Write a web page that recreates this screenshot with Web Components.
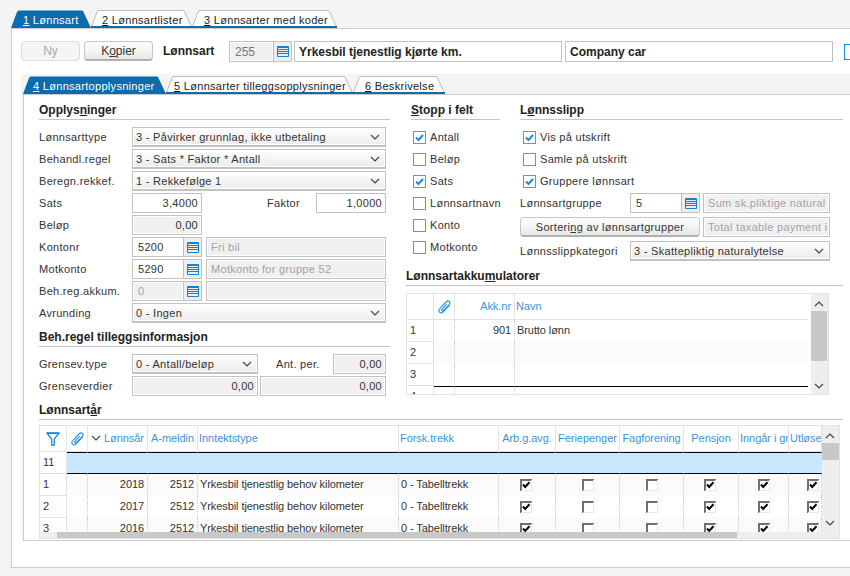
<!DOCTYPE html>
<html>
<head>
<meta charset="utf-8">
<style>
  html, body { margin: 0; height: 576px; overflow: hidden; }
  body { background: #f4f4f4; color: #333; font: 11px "Liberation Sans", Arial, sans-serif; letter-spacing: .3px; }
</style>
</head>
<body>
<pay-tabs left="11">
  <pay-tab w="80" pad="12" active><u>1</u> Lønnsart</pay-tab>
  <pay-tab w="101" pad="11"><u>2</u> Lønnsartlister</pay-tab>
  <pay-tab w="145" pad="12"><u>3</u> Lønnsarter med koder</pay-tab>
</pay-tabs>
<pay-panel>
  <pay-toolbar>
    <pay-btn w="59" disabled>Ny</pay-btn>
    <pay-text w="4"></pay-text>
    <pay-btn w="69"><span>K<u>o</u>pier</span></pay-btn>
    <pay-text w="76" indent="10" bold>Lønnsart</pay-text>
    <pay-field w="63" h="21" value="255" list disabled soft></pay-field>
    <pay-text w="2"></pay-text>
    <pay-field w="268" h="21" value="Yrkesbil tjenestlig kjørte km." bold></pay-field>
    <pay-text w="3"></pay-text>
    <pay-field w="268" h="21" value="Company car" bold></pay-field>
    <pay-edge></pay-edge>
  </pay-toolbar>
  <pay-sheet>
    <pay-tabs slot="tabs" left="2" line>
      <pay-tab w="143" pad="10" active><u>4</u> Lønnsartopplysninger</pay-tab>
      <pay-tab w="187" pad="8"><u>5</u> Lønnsarter tilleggsopplysninger</pay-tab>
      <pay-tab w="92" pad="12"><u>6</u> Beskrivelse</pay-tab>
    </pay-tabs>
    <pay-columns>
      <pay-stack w="351">
        <pay-heading>Opplys<u>n</u>inger</pay-heading>
        <pay-stack gap="2" w="347">
          <pay-row label="Lønnsarttype"><pay-select w="254" value="3 - Påvirker grunnlag, ikke utbetaling"></pay-select></pay-row>
          <pay-row label="Behandl.regel"><pay-select w="254" value="3 - Sats * Faktor * Antall"></pay-select></pay-row>
          <pay-row label="Beregn.rekkef."><pay-select w="254" value="1 - Rekkefølge 1"></pay-select></pay-row>
          <pay-row label="Sats">
            <pay-field w="70" value="3,4000" right></pay-field>
            <pay-text w="114" indent="65">Faktor</pay-text>
            <pay-field w="70" value="1,0000" right></pay-field>
          </pay-row>
          <pay-row label="Beløp"><pay-field w="70" value="0,00" right disabled></pay-field></pay-row>
          <pay-row label="Kontonr">
            <pay-field w="70" value="5200" list></pay-field>
            <pay-text w="4"></pay-text>
            <pay-field w="180" value="Fri bil" disabled faded></pay-field>
          </pay-row>
          <pay-row label="Motkonto">
            <pay-field w="70" value="5290" list></pay-field>
            <pay-text w="4"></pay-text>
            <pay-field w="180" value="Motkonto for gruppe 52" disabled faded></pay-field>
          </pay-row>
          <pay-row label="Beh.reg.akkum.">
            <pay-field w="70" value="0" list disabled faded></pay-field>
            <pay-text w="4"></pay-text>
            <pay-field w="180" value="" disabled></pay-field>
          </pay-row>
          <pay-row label="Avrunding"><pay-select w="254" value="0 - Ingen"></pay-select></pay-row>
        </pay-stack>
        <pay-heading top="3">Beh.re<u>g</u>el tilleggsinformasjon</pay-heading>
        <pay-stack gap="2" w="347">
          <pay-row label="Grensev.type">
            <pay-select w="126" value="0 - Antall/beløp"></pay-select>
            <pay-text w="75" indent="18">Ant. per.</pay-text>
            <pay-field w="53" value="0,00" right disabled></pay-field>
          </pay-row>
          <pay-row label="Grenseverdier">
            <pay-field w="126" value="0,00" right disabled></pay-field>
            <pay-text w="2"></pay-text>
            <pay-field w="126" value="0,00" right disabled></pay-field>
          </pay-row>
        </pay-stack>
      </pay-stack>
      <pay-stack w="437">
        <pay-columns gap="20" left="5" h="166">
          <pay-stack w="89">
            <pay-heading><u>S</u>topp i felt</pay-heading>
            <pay-stack gap="2">
              <pay-check indent="2" checked>Antall</pay-check>
              <pay-check indent="2">Beløp</pay-check>
              <pay-check indent="2" checked>Sats</pay-check>
              <pay-check indent="2">Lønnsartnavn</pay-check>
              <pay-check indent="2">Konto</pay-check>
              <pay-check indent="2">Motkonto</pay-check>
            </pay-stack>
          </pay-stack>
          <pay-stack w="323">
            <pay-heading>L<u>ø</u>nnsslipp</pay-heading>
            <pay-stack gap="2">
              <pay-check indent="3" checked>Vis på utskrift</pay-check>
              <pay-check indent="3">Samle på utskrift</pay-check>
              <pay-check indent="3" checked>Gruppere lønnsart</pay-check>
              <pay-row label="Lønnsartgruppe" lw="110">
                <pay-field w="70" value="5" list></pay-field>
                <pay-text w="3"></pay-text>
                <pay-field w="127" value="Sum sk.pliktige natural" disabled faded></pay-field>
              </pay-row>
              <pay-row top="2">
                <pay-btn w="180" h="20"><span>Sorteri<u>ng</u> av lønnsartgrupper</span></pay-btn>
                <pay-text w="3"></pay-text>
                <pay-field w="127" value="Total taxable payment i" disabled faded></pay-field>
              </pay-row>
              <pay-row label="Lønnsslippkategori" lw="110" top="2"><pay-select w="200" value="3 - Skattepliktig naturalytelse"></pay-select></pay-row>
            </pay-stack>
          </pay-stack>
        </pay-columns>
        <pay-heading>Lønnsartakku<u>m</u>ulatorer</pay-heading>
        <pay-grid w="423" h="102" thumb="17,50" id="akk"></pay-grid>
      </pay-stack>
    </pay-columns>
    <pay-heading top="3">Lønnsart<u>å</u>r</pay-heading>
    <pay-grid w="801" h="114" thumb="17,17" hbar id="years"></pay-grid>
  </pay-sheet>
</pay-panel>

<script>
// tiny helper, every element gets its own shadow root from here
const make = (name, config) => {
  class C extends HTMLElement {
    constructor() {
      super();
      this.attachShadow({ mode: "open" });
    }
    connectedCallback() {
      this.shadowRoot.innerHTML = `<style>${config.pretty(this)}</style>${config.render(this)}`;
    }
  }
  customElements.define(name, C);
};

const esc = (s) => String(s).replace(/&/g, "&amp;").replace(/</g, "&lt;");
const num = (el, key, dflt) => el.hasAttribute(key) ? Number(el.getAttribute(key)) : dflt;

const LIST_ICON = `<svg width="12" height="11" viewBox="0 0 12 11"><path d="M.5.5h11v10H.5zM1 1.500h10M1 3.500h10M1 5.500h10M1 7.500h10" fill="none" stroke="#0a84dc"/></svg>`;
const CHEVRON = `<svg width="10" height="6" viewBox="0 0 10 6"><path d="M1 1l4 4 4-4" fill="none" stroke="#444" stroke-width="1.2"/></svg>`;
const CLIP = `<svg width="13" height="14" viewBox="0 0 13 14"><path d="M11.600 5L5.400 11.600C4.100 13 2.500 13.200 1.500 12.200S.7 9.600 2 8.300L8 2C9.100.9 10.600.7 11.500 1.500S12.100 3.700 11 4.800L5.700 10.200C5 10.900 4.200 11 3.800 10.600S3.600 9.500 4.300 8.800L8.700 4.200" fill="none" stroke="#2f95de" stroke-width="1.200"/></svg>`;
const FUNNEL = `<svg width="14" height="14" viewBox="0 0 14 14"><path d="M1 1.200H13L8.300 7V13L5.700 13V7Z" fill="none" stroke="#1a8ce0" stroke-width="1.300"/><path d="M1 1.200H13" stroke="#1a8ce0" stroke-width="1.800"/></svg>`;

make("pay-tabs", {
  pretty: (el) => `
    :host { display: flex; height: 18px; padding-left: ${num(el, "left", 0)}px; box-sizing: border-box; }
    ${el.hasAttribute("line") ? ":host { height: 20px; padding-top: 2px; }" : ":host { margin-top: 10px; }"}
  `,
  render: () => `<slot></slot>`
});

make("pay-tab", {
  pretty: (el) => `
    :host { display: block; position: relative; width: ${el.getAttribute("w")}px; height: 18px; box-sizing: border-box;
      padding-left: ${el.getAttribute("pad")}px; line-height: 21px; white-space: nowrap;
      color: ${el.hasAttribute("active") ? "#fff" : "#222"}; }
    svg { position: absolute; left: 0; top: 0; }
    span { position: relative; }
  `,
  render: (el) => {
    const w = num(el, "w", 100);
    const shape = `M0 18L6 2Q6.500 .5 8 .5H${w - 9}Q${w - 8} .5 ${w - 7.500} 2L${w} 18`;
    const svg = el.hasAttribute("active")
      ? `<path d="${shape}Z" fill="#0b6cae"/>`
      : `<path d="${shape}" fill="#fff" stroke="#bbb"/><rect y="16" width="${w}" height="2" fill="#0b6cae"/>`;
    return `<svg width="${w}" height="18">${svg}</svg><span><slot></slot></span>`;
  }
});

make("pay-panel", {
  pretty: () => `
    :host { display: block; width: 860px; height: 540px; margin-left: 11px; box-sizing: border-box;
      background: #fff; border: 1px solid #ccc; padding: 12px 0 0 9px; }
  `,
  render: () => `<slot></slot>`
});

make("pay-toolbar", {
  pretty: () => `:host { display: flex; align-items: flex-start; height: 21px; font-size: 12px; letter-spacing: 0; }`,
  render: () => `<slot></slot>`
});

make("pay-edge", {
  pretty: () => `:host { display: block; flex: none; width: 10px; height: 16px; margin: 3px 0 0 11px; box-sizing: border-box; border: 1px solid #1a8ce0; }`,
  render: () => ``
});

make("pay-sheet", {
  pretty: () => `
    :host { display: block; width: 829px; height: 467px; margin-top: 12px; background: #f4f4f4; }
    .body { height: 447px; margin-left: 2px; box-sizing: border-box; background: #fff;
      border-top: 1px solid #ccc; border-bottom: 1px solid #ccc; border-left: 1px solid #ccc; padding: 4px 7px 0 15px; }
  `,
  render: () => `<slot name="tabs"></slot><div class="body"><slot></slot></div>`
});

make("pay-columns", {
  pretty: (el) => `
    :host { display: flex; gap: ${num(el, "gap", 16)}px; padding-left: ${num(el, "left", 0)}px; ${el.hasAttribute("h") ? `height:${el.getAttribute("h")}px;` : ""} }
  `,
  render: () => `<slot></slot>`
});

make("pay-stack", {
  pretty: (el) => `
    :host { display: flex; flex-direction: column; gap: ${num(el, "gap", 0)}px; ${el.hasAttribute("w") ? `width:${el.getAttribute("w")}px;` : ""} }
  `,
  render: () => `<slot></slot>`
});

make("pay-heading", {
  pretty: (el) => `
    :host { display: block; height: 21px; box-sizing: border-box; margin-top: ${num(el, "top", 0)}px; margin-bottom: 7px;
      border-bottom: 1px solid #c4c4c4; font-size: 12px; letter-spacing: 0; font-weight: bold; line-height: 23px; color: #222; }
    ${el.nextElementSibling && el.nextElementSibling.id === "years" ? ":host { margin-bottom: 5px; }" : ""}
  `,
  render: () => `<slot></slot>`
});

make("pay-row", {
  pretty: (el) => `
    :host { display: flex; align-items: center; height: 20px; margin-top: ${num(el, "top", 0)}px; }
    .label { flex: none; width: ${num(el, "lw", 93)}px; white-space: nowrap; }
  `,
  render: (el) => `${el.hasAttribute("label") ? `<div class="label">${esc(el.getAttribute("label"))}</div>` : ""}<slot></slot>`
});

make("pay-text", {
  pretty: (el) => `
    :host { display: block; flex: none; width: ${el.getAttribute("w")}px; box-sizing: border-box; padding-left: ${num(el, "indent", 0)}px;
      white-space: nowrap; ${el.hasAttribute("bold") ? "font-weight: bold; color: #222; line-height: 21px;" : ""} }
  `,
  render: () => `<slot></slot>`
});

make("pay-field", {
  pretty: (el) => {
    const off = el.hasAttribute("disabled");
    return `
      :host { display: flex; flex: none; width: ${el.getAttribute("w")}px; height: ${num(el, "h", 20)}px; box-sizing: border-box;
        border: 1px solid #c2c2c2; background: #fff; }
      .txt { flex: 1; min-width: 0; margin: 1px; padding: 0 ${el.hasAttribute("right") ? "2px" : "3px"} 0 ${el.hasAttribute("list") ? "4px" : "3px"};
        background: ${off ? "#f0f0f0" : "#fff"}; color: ${el.hasAttribute("faded") ? "#a3a3a3" : el.hasAttribute("soft") ? "#777" : "#333"};
        text-align: ${el.hasAttribute("right") ? "right" : "left"}; white-space: nowrap; overflow: hidden;
        line-height: ${num(el, "h", 20) - 3}px; ${el.hasAttribute("bold") ? "font-weight: bold; color: #222;" : ""} }
      .btn { flex: none; width: 17px; display: flex; align-items: center; justify-content: center; background: #eee; border-left: 1px solid #c2c2c2; }
    `;
  },
  render: (el) => `<div class="txt">${esc(el.getAttribute("value"))}</div>${el.hasAttribute("list") ? `<div class="btn">${LIST_ICON}</div>` : ""}`
});

make("pay-select", {
  pretty: (el) => `
    :host { display: flex; align-items: center; flex: none; width: ${el.getAttribute("w")}px; height: 20px; box-sizing: border-box;
      border: 1px solid #c2c2c2; border-bottom-width: 2px; box-shadow: inset 0 0 0 1px #fff; background: linear-gradient(#fff, #f6f6f6 45%, #ebebeb); padding: 0 5px 0 3px; }
    .txt { flex: 1; white-space: nowrap; overflow: hidden; line-height: 18px; }
  `,
  render: (el) => `<div class="txt">${esc(el.getAttribute("value"))}</div>${CHEVRON}`
});

make("pay-btn", {
  pretty: (el) => {
    const off = el.hasAttribute("disabled");
    return `
      :host { display: flex; align-items: center; justify-content: center; flex: none; width: ${el.getAttribute("w")}px; height: ${num(el, "h", 20)}px;
        box-sizing: border-box; border: 1px solid ${off ? "#ddd" : "#c8c8c8"}; border-radius: 4px; ${off ? "" : "border-bottom: 2px solid #b0b0b0;"}
        background: ${off ? "#f5f5f5" : "linear-gradient(#fff, #f4f4f4 55%, #e8e8e8)"}; color: ${off ? "#aaa" : "#333"}; }
    `;
  },
  render: () => `<slot></slot>`
});

make("pay-check", {
  pretty: (el) => `
    :host { display: flex; align-items: center; gap: 4px; height: 20px; padding-left: ${num(el, "indent", 0)}px; white-space: nowrap; }
    svg { flex: none; }
  `,
  render: (el) => `<svg width="13" height="13" viewBox="0 0 13 13"><rect x=".5" y=".5" width="12" height="12" fill="#fff" stroke="#8c8c8c"/>${el.hasAttribute("checked") ? `<path d="M3 6.500l2.500 2.500L10 4" fill="none" stroke="#1a8ce0" stroke-width="2"/>` : ""}</svg><span><slot></slot></span>`
});

// grids take their columns and rows from the tables below
const GRIDS = {
  akk: {
    cols: [27, 21, 60, 295],
    spacer: 3,
    head: [{ t: "" }, { icon: CLIP }, { t: "Akk.nr", a: "right" }, { t: "Navn" }],
    rows: [
      { n: "1", cells: ["", { t: "901", a: "right" }, "Brutto lønn"] },
      { n: "2", cells: ["", "", ""] },
      { n: "3", cells: ["", "", ""] },
      { n: "4", cells: ["", "", ""], line: true }
    ]
  },
  years: {
    cols: [27, 21, 60, 50, 201, 100, 57, 64, 64, 55, 50, 33],
    spacer: 0,
    head: [
      { icon: FUNNEL }, { icon: CLIP }, { t: "Lønnsår", a: "right", sort: true }, { t: "A-meldin", a: "right" },
      { t: "Inntektstype" }, { t: "Forsk.trekk" }, { t: "Arb.g.avg.", a: "center" }, { t: "Feriepenger", a: "center" },
      { t: "Fagforening", a: "center" }, { t: "Pensjon", a: "center" }, { t: "Inngår i gr" }, { t: "Utløse" }
    ],
    rows: [
      { n: "11", sel: true, cells: Array(11).fill("") },
      ...[["1", "2018"], ["2", "2017"], ["3", "2016"]].map(([n, year]) => ({
        n,
        cells: ["", { t: year, a: "right" }, { t: "2512", a: "right" }, "Yrkesbil tjenestlig behov kilometer", "0 - Tabelltrekk",
          { box: 1, nudge: -1 }, { box: 0 }, { box: 0 }, { box: 1, nudge: -1 }, { box: 1 }, { box: 1, nudge: 8 }]
      }))
    ]
  }
};

const BOX = (on) => `<svg width="12" height="12" viewBox="0 0 12 12"><path d="M0 0h12v12H0z" fill="#fff"/><path d="M1 12V1h11" fill="none" stroke="#707070" stroke-width="2"/><path d="M11.500 1v10.500H1" fill="none" stroke="#e6e6e6"/>${on ? `<path d="M3 5.500l2.200 2.400L9.500 3.200" fill="none" stroke="#000" stroke-width="2"/>` : ""}</svg>`;

const cell = (c) => {
  if (typeof c === "string") c = { t: c };
  if ("box" in c) return `<div class="c mid"><span class="b" style="margin-left:${(c.nudge || 0) * 2}px">${BOX(c.box)}</span></div>`;
  if (c.icon) return `<div class="c mid">${c.icon}</div>`;
  const sort = c.sort ? `<span class="sort">${CHEVRON}</span>` : "";
  return `<div class="c ${c.a || "left"}">${sort}${esc(c.t || "")}</div>`;
};

make("pay-grid", {
  pretty: (el) => {
    const g = GRIDS[el.id];
    const [top, high] = el.getAttribute("thumb").split(",");
    const track = g.cols.map((c) => c + "px").join(" ");
    return `
      :host { display: flex; flex: none; width: ${el.getAttribute("w")}px; height: ${el.getAttribute("h")}px; box-sizing: border-box;
        border: 1px solid #e3e3e3; background: #fff; letter-spacing: -.08px; }
      .main { flex: 1; min-width: 0; display: flex; flex-direction: column; overflow: hidden; }
      .rows { flex: 1; min-height: 0; overflow: hidden; }
      .spacer { flex: none; width: ${g.spacer}px; }
      .row { display: grid; grid-template-columns: ${track}; height: 22px; box-sizing: border-box; }
      .head { height: 26px; color: #3b94d6; letter-spacing: -.05px; }
      .c { box-sizing: border-box; padding: 0 3px 0 2px; line-height: 21px; white-space: nowrap; overflow: hidden; border-right: 1px dotted #ccc; }
      .head .c { line-height: 25px; border-right: 1px solid #e3e3e3; border-bottom: 1px solid #e3e3e3; }
      .head .left { padding: 0 0 0 1px; }
      .n { padding-left: 3px; border-right: 1px solid #e3e3e3; border-bottom: 1px solid #e3e3e3; }
      .right { text-align: right; }
      .center { text-align: center; padding: 0; }
      .mid { display: flex; align-items: center; justify-content: center; padding: 0; }
      .b { display: flex; }
      .sort { float: left; margin-left: 1px; }
      .sort svg { vertical-align: 1px; }
      .row:nth-child(even) .c:not(.n) { background: #fbfbfb; }
      .row.sel .c:not(.n) { background: #c9e7fd; border-top: 1px solid #000; border-bottom: 1px solid #000; border-right-color: #c9e7fd; }
      .row.line .c:not(.n) { border-top: 1px solid #000; background: #fff; }
      .hbar { flex: none; height: 6px; background: #eee; position: relative; }
      .hbar i { position: absolute; left: 17px; right: 85px; top: 0; bottom: 0; background: #c8c8c8; }
      .vbar { flex: none; width: 17px; background: #eee; position: relative; }
      .vbar i { position: absolute; left: 0; right: ${el.id === "akk" ? 1 : 0}px; top: ${top}px; height: ${high}px; background: #c8c8c8; }
      .vbar svg { position: absolute; left: 3px; }
      .vbar .up { top: 7px; transform: scaleY(-1); }
      .vbar .down { bottom: ${el.id === "akk" ? 5 : 12}px; }
    `;
  },
  render: (el) => {
    const g = GRIDS[el.id];
    const head = g.head.map(cell).join("");
    const rows = g.rows.map((r) => `<div class="row ${r.sel ? "sel" : ""} ${r.line ? "line" : ""}"><div class="c n">${r.n}</div>${r.cells.map(cell).join("")}</div>`).join("");
    return `
      <div class="main">
        <div class="row head">${head}</div>
        <div class="rows">${rows}</div>
        ${el.hasAttribute("hbar") ? `<div class="hbar"><i></i></div>` : ""}
      </div>
      <div class="spacer"></div>
      <div class="vbar"><i></i>${CHEVRON.replace("<svg", '<svg class="up"')}${CHEVRON.replace("<svg", '<svg class="down"')}</div>
    `;
  }
});
</script>
</body>
</html>
